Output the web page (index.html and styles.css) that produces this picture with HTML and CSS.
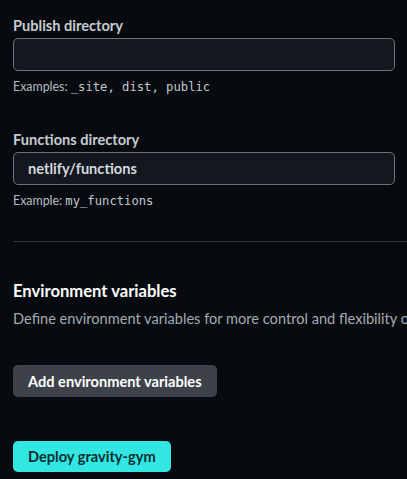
FILE: index.html
```html
<!DOCTYPE html>
<html>
<head>
<meta charset="utf-8">
<link rel="stylesheet" href="styles.css">
</head>
<body>
<main class="page">
  <div class="field">
    <label class="label">Publish directory</label>
    <div class="input"></div>
    <p class="hint">Examples: <code>_site, dist, public</code></p>
  </div>
  <div class="field field-second">
    <label class="label">Functions directory</label>
    <div class="input"><span class="value">netlify/functions</span></div>
    <p class="hint">Example: <code>my_functions</code></p>
  </div>
  <hr class="divider">
  <section class="env">
    <h2 class="heading">Environment variables</h2>
    <p class="desc">Define environment variables for more control and flexibility over your build.</p>
    <button class="btn btn-secondary">Add environment variables</button>
  </section>
  <button class="btn btn-primary">Deploy gravity-gym</button>
</main>
</body>
</html>
```

FILE: styles.css
```css
html, body {
  margin: 0;
  padding: 0;
  background: #070b10;
  height: 100%;
  overflow: hidden;
}
.page {
  font-family: Lato, "Noto Sans", sans-serif;
  color: #c9ced4;
  padding: 16px 0 0 13px;
  display: flex;
  flex-direction: column;
  align-items: flex-start;
}
.field {
  width: 382px;
  display: flex;
  flex-direction: column;
}
.field-second {
  margin-top: 35px;
}
.label {
  font-size: 14.6px;
  font-weight: 700;
  line-height: 20px;
  color: #c6cbd1;
}
.input {
  margin-top: 2px;
  height: 31px;
  border: 1px solid #6b7079;
  border-radius: 5px;
  background: #131820;
  display: flex;
  align-items: center;
  padding: 0 14px;
}
.value {
  font-size: 14.6px;
  font-weight: 700;
  color: #d4d8dd;
}
.hint {
  margin: 8px 0 0;
  font-size: 12.4px;
  line-height: 16px;
  color: #b7bcc3;
}
.hint code {
  font-family: "DejaVu Sans Mono", "Liberation Mono", monospace;
  font-size: 12.2px;
  color: #c3c8ce;
}
.divider {
  align-self: stretch;
  margin: 32px 0 0;
  border: 0;
  border-top: 1px solid #30353c;
  height: 0;
}
.env {
  margin-top: 38px;
  display: flex;
  flex-direction: column;
  align-items: flex-start;
}
.heading {
  margin: 0;
  font-size: 16.6px;
  font-weight: 700;
  line-height: 22px;
  color: #ffffff;
}
.desc {
  margin: 7px 0 0;
  font-size: 14.6px;
  line-height: 20px;
  color: #a4aab1;
  white-space: nowrap;
}
.btn {
  font-family: Lato, "Noto Sans", sans-serif;
  font-size: 14.6px;
  font-weight: 700;
  border: 0;
  border-radius: 5px;
  padding: 0 15px;
  cursor: pointer;
}
.btn-secondary {
  margin-top: 36px;
  height: 32px;
  background: #3d424a;
  color: #ffffff;
}
.btn-primary {
  margin-top: 44px;
  height: 31px;
  background: #32e6e2;
  color: #0e2e30;
}
```
